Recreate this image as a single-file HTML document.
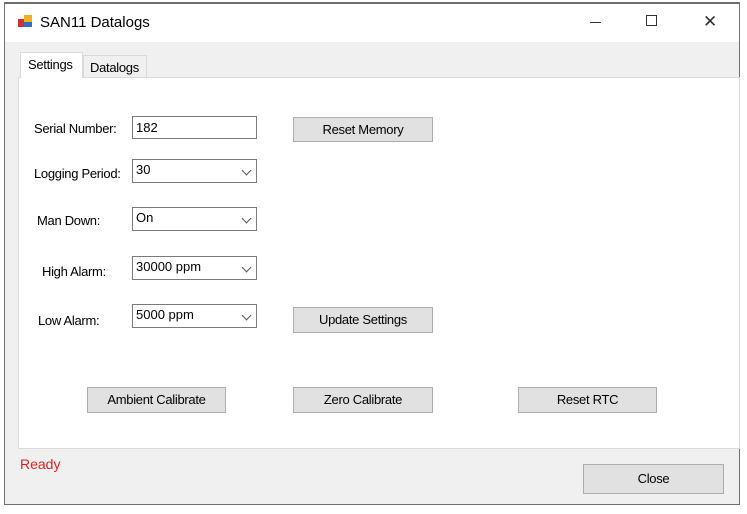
<!DOCTYPE html>
<html><head><style>
body{margin:0;width:747px;height:514px;background:#fff;position:relative;overflow:hidden;font-family:"Liberation Sans",sans-serif;font-size:13px;color:#000}
.a{position:absolute}
.win{left:4px;top:2px;width:736px;height:503px;border:1px solid #707070;border-top:2px solid #6e6e6e;box-sizing:border-box;background:#f0f0f0}
.btn{position:absolute;background:#e1e1e1;border:1px solid #adadad;box-sizing:border-box;text-align:center;font-size:13px;letter-spacing:-0.3px}
.tb{position:absolute;background:#fff;border:1px solid #7a7a7a;box-sizing:border-box;padding-left:3px;font-size:13px}
.lbl{position:absolute;font-size:13px;letter-spacing:-0.3px}
.chev{position:absolute;right:6px;top:7px;width:6px;height:6px;border-right:1px solid #555;border-bottom:1px solid #555;transform:rotate(45deg)}
</style></head><body>
<div class="a win"></div>
<div class="a" style="left:5px;top:4px;width:734px;height:38px;background:#fff"></div>
<div class="a" style="left:18px;top:15px;width:14px;height:12px">
<div class="a" style="left:0;top:4px;width:6px;height:8px;background:#d03030"></div>
<div class="a" style="left:6px;top:0;width:8px;height:7px;background:#f0b020"></div>
<div class="a" style="left:6px;top:7px;width:8px;height:5px;background:#3070c0"></div>
</div>
<div class="a" style="left:40px;top:14px;font-size:15px">SAN11 Datalogs</div>
<div class="a" style="left:590px;top:22px;width:11px;height:1px;background:#333"></div>
<div class="a" style="left:646px;top:15px;width:11px;height:11px;border:1px solid #333;box-sizing:border-box"></div>
<div class="a" style="left:703px;top:12px;font-size:17px;color:#333">✕</div>
<div class="a" style="left:18px;top:77px;width:722px;height:372px;background:#fff;border:1px solid #dadada;box-sizing:border-box"></div>
<div class="a" style="left:20px;top:52px;width:63px;height:26px;background:#fff;border:1px solid #d9d9d9;border-bottom:none;box-sizing:border-box;padding:4px 0 0 7px;font-size:13px;letter-spacing:-0.3px">Settings</div>
<div class="a" style="left:83px;top:55px;width:64px;height:22px;background:#f0f0f0;border:1px solid #d9d9d9;border-bottom:none;box-sizing:border-box;padding:4px 0 0 6px;font-size:13px;letter-spacing:-0.3px">Datalogs</div>

<div class="lbl" style="left:34px;top:121px">Serial Number:</div>
<div class="tb" style="left:132px;top:116px;width:125px;height:23px;line-height:21px">182</div>
<div class="btn" style="left:293px;top:117px;width:140px;height:25px;line-height:23px">Reset Memory</div>

<div class="lbl" style="left:34px;top:166px">Logging Period:</div>
<div class="tb" style="left:132px;top:159px;width:125px;height:24px;line-height:20px">30<div class="chev"></div></div>

<div class="lbl" style="left:37px;top:213px">Man Down:</div>
<div class="tb" style="left:132px;top:207px;width:125px;height:24px;line-height:20px">On<div class="chev"></div></div>

<div class="lbl" style="left:42px;top:264px">High Alarm:</div>
<div class="tb" style="left:132px;top:256px;width:125px;height:24px;line-height:20px">30000 ppm<div class="chev"></div></div>

<div class="lbl" style="left:38px;top:313px">Low Alarm:</div>
<div class="tb" style="left:132px;top:304px;width:125px;height:24px;line-height:20px">5000 ppm<div class="chev"></div></div>
<div class="btn" style="left:293px;top:307px;width:140px;height:26px;line-height:24px">Update Settings</div>

<div class="btn" style="left:87px;top:387px;width:139px;height:26px;line-height:24px">Ambient Calibrate</div>
<div class="btn" style="left:293px;top:387px;width:140px;height:26px;line-height:24px">Zero Calibrate</div>
<div class="btn" style="left:518px;top:387px;width:139px;height:26px;line-height:24px">Reset RTC</div>

<div class="a" style="left:20px;top:456px;color:#e02020;font-size:14px">Ready</div>
<div class="btn" style="left:583px;top:464px;width:141px;height:30px;line-height:28px">Close</div>
</body></html>
